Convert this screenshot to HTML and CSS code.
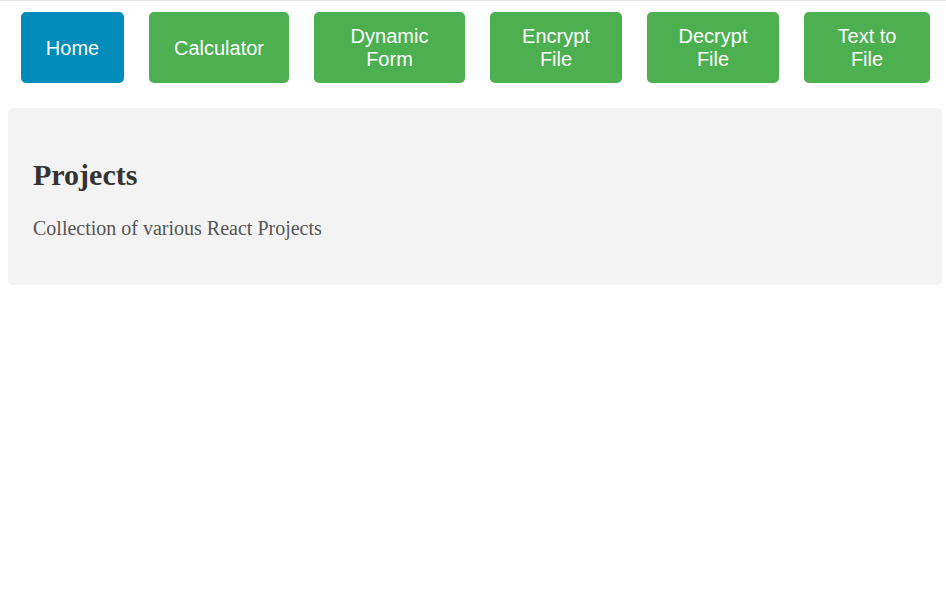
FILE: index.html
```html
<!DOCTYPE html>
<html>
<head>
<meta charset="utf-8">
<link rel="stylesheet" href="styles.css">
</head>
<body>
<nav class="nav">
  <button class="btn btn-home active">Home</button>
  <button class="btn btn-calc">Calculator</button>
  <button class="btn btn-form">Dynamic Form</button>
  <button class="btn btn-enc">Encrypt File</button>
  <button class="btn btn-dec">Decrypt File</button>
  <button class="btn btn-txt">Text to File</button>
</nav>
<main class="panel">
  <h2 class="title">Projects</h2>
  <p class="desc">Collection of various React Projects</p>
</main>
</body>
</html>
```
FILE: styles.css
```css
html { border-top: 1px solid #e3e3e3; }
body {
  margin: 0;
  padding: 0 4px 8px 8px;
  font-family: "Liberation Serif", "Times New Roman", serif;
  background: #fff;
}
.nav {
  display: flex;
  gap: 25px;
  padding: 11px 0 0 13px;
  margin-bottom: 25px;
}
.btn {
  height: 71px;
  border: none;
  border-radius: 5px;
  background: #4caf50;
  color: #fff;
  font-family: "Liberation Sans", Arial, sans-serif;
  font-size: 20px;
  line-height: 23px;
  padding: 1px 20px 0;
  cursor: pointer;
  flex: none;
}
.btn.active { background: #008cba; }
.btn-home { width: 103px; }
.btn-calc { width: 140px; padding: 1px 10px 0; }
.btn-form { width: 151px; }
.btn-enc { width: 132px; }
.btn-dec { width: 132px; }
.btn-txt { width: 126px; }
.panel {
  background: #f3f3f3;
  border-radius: 5px;
  padding: 25px 25px 29px;
}
.title {
  margin: 25px 0 25px;
  font-size: 30px;
  color: #333;
  font-weight: bold;
}
.desc {
  margin: 0 0 16px;
  font-size: 20px;
  color: #555;
}
```
